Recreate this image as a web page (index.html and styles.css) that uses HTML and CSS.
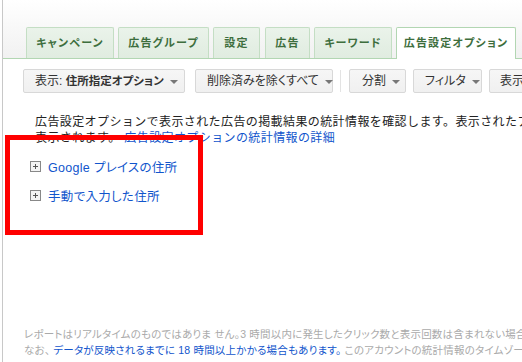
FILE: index.html
```html
<!DOCTYPE html>
<html lang="ja">
<head>
  <meta charset="UTF-8">
  <title>広告設定オプション</title>
  <link rel="stylesheet" href="styles.css">
</head>
<body>
  <div class="page">

    <!-- Tabs -->
    <div class="tabs">
      <div class="tab tab-w1">キャンペーン</div>
      <div class="tab tab-w2">広告グループ</div>
      <div class="tab tab-w3">設定</div>
      <div class="tab tab-w4">広告</div>
      <div class="tab tab-w5">キーワード</div>
      <div class="tab tab-active">広告設定オプション</div>
    </div>

    <!-- Toolbar -->
    <div class="toolbar">
      <div class="btn btn-view">表示: <b>住所指定オプション</b><span class="caret"></span></div>
      <div class="btn btn-deleted">削除済みを除くすべて<span class="caret"></span></div>
      <div class="sep"></div>
      <div class="btn btn-split">分割<span class="caret"></span></div>
      <div class="btn btn-filter">フィルタ<span class="caret"></span></div>
      <div class="btn btn-more">表示</div>
    </div>

    <!-- Description -->
    <p class="intro">
      広告設定オプションで表示された広告の掲載結果の統計情報を確認します。表示されたアカウントの<br>
      表示されます。 <a href="#">広告設定オプションの統計情報の詳細</a>
    </p>

    <!-- Expandable sections -->
    <div class="sections">
      <div class="section"><span class="expander"></span><a href="#">Google プレイスの住所</a></div>
      <div class="section"><span class="expander"></span><a href="#">手動で入力した住所</a></div>
    </div>

    <!-- Footer note -->
    <div class="note">
      レポートはリアルタイムのものではありま せん。3 時間以内に発生したクリック数と表示回数は含まれない場合があります。<br>
      なお、 <a href="#">データが反映されるまでに 18 時間以上かかる場合もあります。</a> このアカウントの統計情報のタイムゾーン
    </div>

    <div class="highlight"></div>
  </div>
</body>
</html>
```

FILE: styles.css
```css
html, body {
  margin: 0;
  height: 100%;
  overflow: hidden;
  background: #fff;
}
body {
  font-family: "Liberation Sans", "Noto Sans CJK JP", sans-serif;
  font-feature-settings: "palt";
  color: #222;
}
a {
  color: #1155cc;
  text-decoration: none;
}
.page {
  position: relative;
  margin-left: 2px;
  height: 362px;
  border-left: 1px solid #c8c8c8;
}

/* tabs */
.tabs {
  display: flex;
  gap: 4px;
  padding: 27px 0 0 23px;
  border-bottom: 1px solid #b2d6b2;
  background: linear-gradient(#ffffff, #f1f1f1);
  width: 700px;
}
.tab {
  height: 30px;
  line-height: 30px;
  text-align: center;
  font-size: 11px;
  font-weight: bold;
  letter-spacing: 1.2px;
  color: #3d6e3d;
  border: 1px solid #c4dec4;
  border-bottom: none;
  border-radius: 2px 2px 0 0;
  background: linear-gradient(#eaf3ea, #e0ece0);
}
.tab-w1 { width: 86px; }
.tab-w2 { width: 89px; }
.tab-w3 { width: 45px; margin-right: 1px; }
.tab-w4 { width: 43px; }
.tab-w5 { width: 76px; }
.tab-active {
  width: 118px;
  height: 31px;
  margin-bottom: -1px;
  background: #fff;
  border-color: #b2d6b2;
}

/* toolbar */
.toolbar {
  display: flex;
  align-items: center;
  margin: 10px 0 0 20px;
  width: 700px;
}
.btn {
  box-sizing: border-box;
  height: 24px;
  line-height: 22px;
  padding-left: 11px;
  font-size: 12px;
  color: #333;
  border: 1px solid #d8d8d8;
  border-radius: 2px;
  background: linear-gradient(#f6f6f6, #f0f0f0);
  white-space: nowrap;
}
.btn b {
  font-size: 11.5px;
}
.caret {
  display: inline-block;
  margin-left: 6px;
  vertical-align: middle;
  border-left: 4px solid transparent;
  border-right: 4px solid transparent;
  border-top: 4px solid #777;
}
.btn-view { width: 162px; margin-right: 10px; }
.btn-deleted { width: 138px; }
.sep {
  width: 1px;
  height: 22px;
  margin: 0 8px 0 7px;
  background: #e3e3e3;
}
.btn-split { width: 57px; margin-right: 7px; padding-left: 12px; }
.btn-filter { width: 69px; margin-right: 7px; padding-left: 11px; }
.btn-more { width: 60px; padding-left: 10px; }

/* intro text */
.intro {
  margin: 21px 0 0 32px;
  font-size: 12px;
  font-feature-settings: normal;
  line-height: 16px;
  letter-spacing: 0.4px;
  white-space: nowrap;
  color: #222;
}

/* sections */
.sections {
  margin: 6px 0 0 27px;
}
.section {
  display: flex;
  align-items: center;
  height: 29px;
  font-size: 12.5px;
  letter-spacing: 0.3px;
}
.expander {
  position: relative;
  box-sizing: border-box;
  width: 11px;
  height: 11px;
  margin-right: 7px;
  border: 1px solid #888;
  background: #f4f4f4;
}
.expander::before,
.expander::after {
  content: "";
  position: absolute;
  background: #555;
}
.expander::before { left: 2px; top: 4px; width: 5px; height: 1px; }
.expander::after { left: 4px; top: 2px; width: 1px; height: 5px; }

/* footer note */
.note {
  position: absolute;
  left: 21px;
  top: 326px;
  font-size: 10.5px;
  line-height: 16px;
  letter-spacing: 0.2px;
  color: #aaa;
  white-space: nowrap;
}

/* red annotation box */
.highlight {
  position: absolute;
  left: 2px;
  top: 135px;
  width: 188px;
  height: 90px;
  border: 5px solid #ff0000;
}
```
